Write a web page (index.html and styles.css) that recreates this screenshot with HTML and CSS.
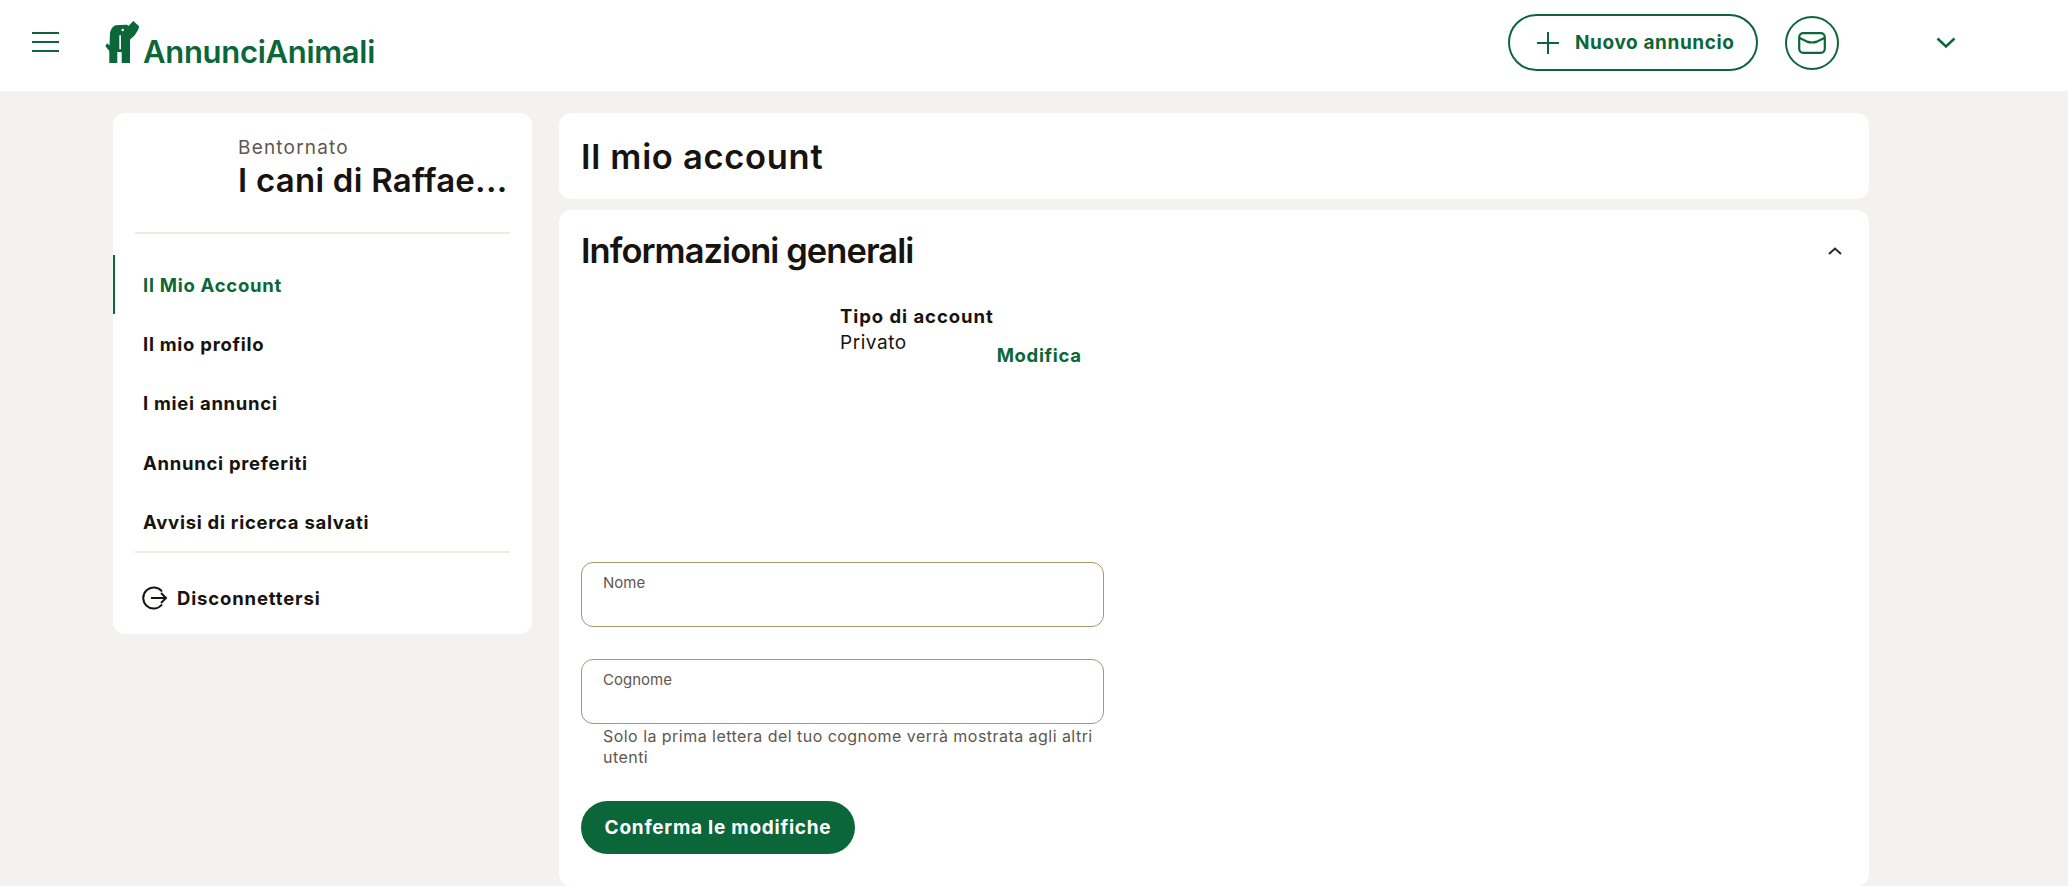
FILE: index.html
```html
<!DOCTYPE html>
<html lang="it">
<head>
<meta charset="utf-8">
<title>Il mio account - AnnunciAnimali</title>
<link rel="stylesheet" href="styles.css">
</head>
<body>
<header class="topbar">
  <button class="burger" aria-label="Menu"><span></span><span></span><span></span></button>
  <a class="logo" href="#">
    <svg class="logo-mark" viewBox="0 0 35 42" aria-hidden="true">
      <path fill-rule="evenodd" d="M5 11.700C6 8 8 5 10.500 4.300L21 3.800C22 3.800 23 4.300 23.500 5L28.300 0l6 5.500C33 9.500 31 13 28.300 15.700L25 18.500V42H16.700V31H12.300V42H4.300V30L.3 25l2-2.700 2.200 2.200zM14.300 14.300v14h1.700v-14zM17.700 7.800a1.200 1.200 0 1 0 0 2.400 1.200 1.200 0 0 0 0-2.400z"/>
    </svg>
    <span class="logo-text">AnnunciAnimali</span>
  </a>
  <div class="top-actions">
    <a class="new-ad" href="#">
      <svg class="plus" viewBox="0 0 22 22" aria-hidden="true"><path d="M11 0v22M0 11h22"/></svg>
      <span>Nuovo annuncio</span>
    </a>
    <a class="mail" href="#" aria-label="Messaggi">
      <svg viewBox="0 0 28 22" aria-hidden="true"><rect x="1.200" y="1.200" width="25.600" height="19.600" rx="4"/><path d="M1.500 6 9 9.600q5 1.800 10 0L26.500 6"/></svg>
    </a>
    <svg class="chevron" viewBox="0 0 20 11" aria-hidden="true"><path d="M1.500 1.500 10 9.500l8.500-8"/></svg>
  </div>
</header>

<div class="page">
  <aside class="side">
    <div class="welcome">
      <div class="hello">Bentornato</div>
      <div class="user">I cani di Raffae...</div>
    </div>
    <nav class="nav">
      <a class="nav-item active" href="#">Il Mio Account</a>
      <a class="nav-item" href="#">Il mio profilo</a>
      <a class="nav-item" href="#">I miei annunci</a>
      <a class="nav-item" href="#">Annunci preferiti</a>
      <a class="nav-item" href="#">Avvisi di ricerca salvati</a>
    </nav>
    <a class="logout" href="#">
      <svg viewBox="0 0 26 24" aria-hidden="true"><path d="M20 5.500A10.500 10.500 0 1 0 20 18.500M9 12h15M19 7l5 5-5 5"/></svg>
      <span>Disconnettersi</span>
    </a>
  </aside>

  <main class="main">
    <section class="card title-card"><h1>Il mio account</h1></section>
    <section class="card info-card">
      <div class="info-head">
        <h2>Informazioni generali</h2>
        <svg class="collapse" viewBox="0 0 14 8" aria-hidden="true"><path d="M1 7l6-5.500L13 7"/></svg>
      </div>
      <div class="account-row">
        <div>
          <div class="acc-label">Tipo di account</div>
          <div class="acc-value">Privato</div>
        </div>
        <a class="edit" href="#">Modifica</a>
      </div>
      <form class="form">
        <label class="field"><span>Nome</span><input type="text"></label>
        <label class="field second"><span>Cognome</span><input type="text"></label>
        <p class="help">Solo la prima lettera del tuo cognome verrà mostrata agli altri utenti</p>
        <button class="confirm" type="button">Conferma le modifiche</button>
      </form>
    </section>
  </main>
</div>
</body>
</html>
```

FILE: styles.css
```css
* { box-sizing: border-box; }
html, body { margin: 0; height: 886px; overflow: hidden; }
body { background: #f3f2ee; color: #17130f; font-family: Inter, "Liberation Sans", sans-serif; }
a { color: inherit; text-decoration: none; }

.topbar { height: 91px; background: #fff; display: flex; align-items: center; padding-left: 32px; }
.burger { width: 27px; height: 20px; padding: 0; border: 0; background: none; display: flex; flex-direction: column; justify-content: space-between; margin-top: -7px; }
.burger span { display: block; height: 2px; background: #0b6739; }
.logo { display: flex; align-items: flex-end; margin-left: 46px; color: #0b6739; margin-top: -7px; }
.logo-mark { width: 35px; height: 42px; fill: #0b6739; display: block; }
.logo-text { font-size: 31px; line-height: 30px; font-weight: 600; letter-spacing: -0.3px; margin-left: 3px; margin-bottom: -4px; }
.top-actions { margin-left: auto; display: flex; align-items: center; margin-right: 112px; margin-top: -6px; }
.new-ad { width: 250px; height: 57px; border: 2px solid #0b6739; border-radius: 29px; display: flex; align-items: center; padding-left: 27px; color: #0b6739; font-size: 19px; font-weight: 700; letter-spacing: 0.6px; }
.plus { width: 22px; height: 22px; fill: none; stroke: #0b6739; stroke-width: 2; margin-right: 16px; }
.mail { width: 54px; height: 54px; margin-left: 27px; border: 2px solid #0b6739; border-radius: 50%; display: flex; align-items: center; justify-content: center; }
.mail svg { width: 28px; height: 22px; fill: none; stroke: #0b6739; stroke-width: 2.200; }
.chevron { width: 20px; height: 11px; margin-left: 97px; fill: none; stroke: #0b6739; stroke-width: 2.500; }

.page { display: flex; align-items: flex-start; padding: 22px 0 0 113px; gap: 27px; }
.side { width: 419px; height: 521px; background: #fff; border-radius: 12px; }
.welcome { margin: 0 22px; height: 121px; padding: 24px 0 0 103px; border-bottom: 2px solid #efeae5; }
.hello { font-size: 19px; line-height: 22px; color: #5f5650; letter-spacing: 1.200px; }
.user { font-size: 33px; line-height: 40px; font-weight: 600; white-space: nowrap; letter-spacing: 0.25px; margin-top: 1px; }
.nav { margin-top: 21px; display: flex; flex-direction: column; }
.nav-item { height: 59.400px; padding-left: 28px; display: flex; align-items: center; font-size: 18.500px; font-weight: 700; letter-spacing: 0.72px; border-left: 2px solid transparent; }
.nav-item.active { color: #0b6739; border-left-color: #0b6739; }
.logout { margin: -1px 22px 0; border-top: 2px solid #efeae5; padding: 33px 0 0 7px; display: flex; align-items: center; gap: 9px; font-size: 18.500px; font-weight: 700; letter-spacing: 0.85px; }
.logout svg { width: 26px; height: 24px; fill: none; stroke: #17130f; stroke-width: 2; }

.main { width: 1310px; display: flex; flex-direction: column; gap: 11px; }
.card { background: #fff; border-radius: 12px; }
.title-card { height: 86px; padding: 2px 22px 0; display: flex; align-items: center; }
h1, h2 { margin: 0; font-size: 34.500px; line-height: 40px; font-weight: 600; }
h1 { letter-spacing: 0.7px; }
h2 { letter-spacing: -0.95px; }
.info-card { height: 676px; padding: 21px 22px 0; }
.info-head { display: flex; align-items: center; justify-content: space-between; padding-right: 5px; }
.collapse { width: 14px; height: 8px; fill: none; stroke: #2c2a28; stroke-width: 2; }
.account-row { display: flex; align-items: flex-start; margin: 33px 0 0 259px; height: 258px; }
.acc-label { font-size: 18.500px; line-height: 25px; font-weight: 700; letter-spacing: 0.95px; }
.acc-value { font-size: 19px; line-height: 27px; letter-spacing: 0.55px; }
.edit { color: #0b6739; font-size: 18.500px; font-weight: 700; letter-spacing: 0.65px; line-height: 25px; margin: 39px 0 0 3px; }
.form { width: 523px; }
.field { display: block; height: 65px; border: 1px solid #a8976f; border-radius: 12px; padding: 11px 21px 0; }
.field span { display: block; font-size: 15px; line-height: 18px; color: #5f5650; }
.field input { display: block; width: 100%; border: 0; padding: 0; height: 24px; background: none; }
.second { margin-top: 32px; }
.help { margin: 2px 0 0; padding: 0 4px 0 22px; font-size: 16px; line-height: 21px; color: #5f5650; letter-spacing: 0.46px; }
.confirm { display: block; margin-top: 33px; width: 274px; height: 53px; border: 0; border-radius: 27px; background: #0b6739; color: #fff; font: 700 19px Inter, "Liberation Sans", sans-serif; letter-spacing: 0.75px; }
```
